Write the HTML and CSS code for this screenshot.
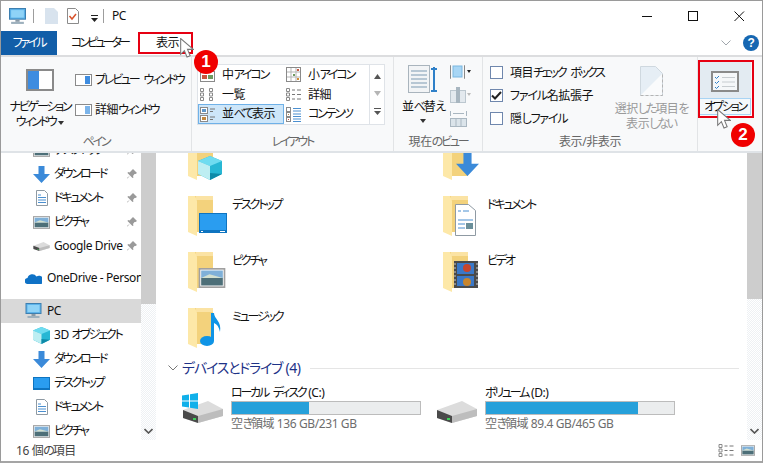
FILE: index.html
```html
<!DOCTYPE html>
<html lang="ja">
<head>
<meta charset="utf-8">
<title>PC</title>
<link rel="stylesheet" href="styles.css">
</head>
<body>
<svg class="defs" width="0" height="0">
  <defs>
    <symbol id="monitor" viewBox="0 0 16 16"><rect x="0.5" y="0.5" width="15" height="10" fill="#5cb3ea" stroke="#3d7fb0"/><rect x="2" y="2" width="12" height="7" fill="#8fd3f7"/><rect x="6" y="11" width="4" height="2" fill="#8a9aa6"/><rect x="2" y="13" width="12" height="2" fill="#9db0bd"/></symbol>
    <symbol id="arrow" viewBox="0 0 17 17"><path d="M5.5 0h6v8h5.5l-8.500 9L0 8h5.500z" fill="#3b8ad9"/></symbol>
    <symbol id="doc" viewBox="0 0 12 16"><path d="M.5.500h8l3 3v12H.500z" fill="#fff" stroke="#8f9aa3"/><path d="M2 5h3M2 7.500h8M2 10h8M2 12.500h8" stroke="#4a8fd0"/></symbol>
    <symbol id="pic" viewBox="0 0 16 12"><rect x=".5" y=".5" width="15" height="11" fill="#fff" stroke="#a0a0a0"/><rect x="1.500" y="1.500" width="13" height="4.500" fill="#7fb0d8"/><rect x="1.500" y="6" width="13" height="4.500" fill="#4d6f78"/><path d="M1.500 6l5-2.200 8 2.200z" fill="#d3e0cf"/></symbol>
    <symbol id="pin" viewBox="0 0 10 10"><path d="M6 0l4 4-1.500 1-1 0-1.500 2 .5 1.500-1 .5L3 6.500 0.500 9.500 0 9l3-2.500L.5 4l.5-1 1.500.5L5 1z" fill="#9a9a9a"/></symbol>
    <symbol id="cube" viewBox="0 0 24 24"><path d="M12 0l12 5v13l-12 6L0 18V5z" fill="#27b7d4"/><path d="M12 0l12 5-12 5L0 5z" fill="#6fdcf0"/><path d="M0 5l12 5v14L0 18z" fill="#bdeef2"/><path d="M12 17l12 1-12 6z" fill="#0e8aa8"/></symbol>
    <symbol id="drive" viewBox="0 0 42 22"><path d="M1 9L26 0l15 8v7L16 22 1 17z" fill="#dcdcdc"/><path d="M1 9l15 6v7L1 17z" fill="#4a4a4a"/><path d="M16 15L41 8v7l-25 7z" fill="#bdbdbd"/><rect x="11" y="17" width="3" height="2" fill="#3ecf5a"/></symbol>
    <symbol id="folder" viewBox="0 0 26 40"><path d="M1 0h25v36H9z" fill="#f3d27c"/><path d="M9 0h17v4H9z" fill="#fbe3a4"/><path d="M1 0h7l2 5v35l-9-4z" fill="#fde8a8"/></symbol>
    <symbol id="cursor" viewBox="0 0 13 19"><path d="M.5.500v15l3.500-3.500 2.500 6 3-1.200-2.500-6h5.500z" fill="#fff" stroke="#777"/></symbol>
    <symbol id="i-medium" viewBox="0 0 15 15"><rect x=".5" y="4.500" width="14" height="10" fill="#fff" stroke="#8a8a8a"/><rect x="2" y="8" width="5" height="4" fill="#c9553f"/><rect x="8" y="8" width="5" height="4" fill="#6d9a5f"/></symbol>
    <symbol id="i-small" viewBox="0 0 15 15"><rect x=".5" y=".5" width="14" height="14" fill="#fff" stroke="#8a8a8a"/><path d="M5 1v13M10 1v13M1 5h13M1 10h13" stroke="#b5b5b5"/><rect x="11" y="2" width="2" height="2" fill="#c9553f"/><rect x="11" y="11" width="2" height="2" fill="#d08a35"/><rect x="7" y="7" width="2" height="2" fill="#6d9a5f"/></symbol>
    <symbol id="i-list" viewBox="0 0 15 15"><path d="M.5 1.500h3v3h-3zM.5 6h3v3h-3zM.5 10.500h3v3h-3zM9.500 1.500h3v3h-3zM9.500 6h3v3h-3zM9.500 10.500h3v3h-3z" fill="#fff" stroke="#8a8a8a"/></symbol>
    <symbol id="i-details" viewBox="0 0 15 15"><path d="M.5 1.500h3v3h-3zM.5 6h3v3h-3zM.5 10.500h3v3h-3z" fill="#fff" stroke="#8a8a8a"/><path d="M6 3h3M11 3h4M6 7.500h3M11 7.500h4M6 12h3M11 12h4" stroke="#777"/></symbol>
    <symbol id="i-tiles" viewBox="0 0 15 15"><rect x=".5" y=".5" width="7" height="6" fill="#fff" stroke="#8a8a8a"/><rect x=".5" y="8.500" width="7" height="6" fill="#fff" stroke="#8a8a8a"/><rect x="2" y="2" width="4" height="3" fill="#5f97c9"/><rect x="2" y="10" width="4" height="3" fill="#c2883f"/><path d="M10 2h5M10 4.500h3M10 10h5M10 12.500h3" stroke="#777"/></symbol>
    <symbol id="i-content" viewBox="0 0 15 15"><rect x=".5" y=".5" width="4" height="4" fill="#fff" stroke="#8a8a8a"/><rect x=".5" y="5.500" width="4" height="4" fill="#fff" stroke="#8a8a8a"/><rect x=".5" y="10.500" width="4" height="4" fill="#fff" stroke="#8a8a8a"/><rect x="2" y="7" width="1" height="1" fill="#c2883f"/><rect x="2" y="12" width="1" height="1" fill="#c9553f"/><path d="M7 1.500h8M7 4h8M7 7h8M7 9.500h8M7 12h8M7 14.500h8" stroke="#4a8fd0"/></symbol>
  </defs>
</svg>

<div class="window">
  <header class="titlebar">
    <svg class="ti-pc" width="17" height="17"><use href="#monitor"/></svg>
    <span class="ti-sep"></span>
    <svg class="ti-new" width="13" height="16" viewBox="0 0 13 16"><path d="M0 0h9l4 4v12H0z" fill="#d8e3ee"/></svg>
    <svg class="ti-check" width="12" height="16" viewBox="0 0 12 16"><path d="M.5.500h8l3 3v12H.500z" fill="#fff" stroke="#8b8b8b"/><path d="M2.500 8l2.500 3 4-5" fill="none" stroke="#d9532c" stroke-width="1.500"/></svg>
    <svg class="ti-caret" width="7" height="7" viewBox="0 0 7 7"><path d="M0 0h7v1H0zM0 3h7L3.500 7z" fill="#222"/></svg>
    <span class="ti-sep ti-sep2"></span>
    <span class="ti-name">PC</span>
    <span class="winbtns">
      <svg width="11" height="11" viewBox="0 0 11 11"><path d="M0 5.500h10" stroke="#111"/></svg>
      <svg width="11" height="11" viewBox="0 0 11 11"><rect x=".5" y=".5" width="9" height="9" fill="none" stroke="#111"/></svg>
      <svg width="11" height="11" viewBox="0 0 11 11"><path d="M.5.500l9.500 9.500M10 .500L.5 10" stroke="#111"/></svg>
    </span>
  </header>

  <nav class="tabs">
    <span class="tab tab-file"><span class="k">ファイル</span></span>
    <span class="tab tab-pc"><span class="kx">コンピューター</span></span>
    <span class="tab tab-view">表示</span>
    <span class="tab-tools">
      <svg width="10" height="6" viewBox="0 0 10 6"><path d="M.5.500L5 5 9.500.500" fill="none" stroke="#a0a6ac"/></svg>
      <span class="help">?</span>
    </span>
  </nav>

  <section class="ribbon">
    <div class="group g-pane">
      <div class="g-body pane-body">
        <div class="big-btn nav-pane">
          <svg width="28" height="22" viewBox="0 0 28 22"><rect x="1" y="1" width="26" height="20" fill="#fff" stroke="#8a8a8a" stroke-width="2"/><rect x="2" y="2" width="11" height="18" fill="#3e8ce0"/></svg>
          <span class="big-label"><span class="k">ナビゲーション</span><br><span class="k">ウィンドウ</span> <span class="caret"></span></span>
        </div>
        <div class="pane-list">
          <div class="pane-row"><svg width="17" height="12" viewBox="0 0 17 12"><rect x=".5" y=".5" width="16" height="11" fill="#fff" stroke="#8a8a8a"/><rect x="10" y="2" width="5" height="8" fill="#3e8ce0"/></svg><span class="k">プレビュー ウィンドウ</span></div>
          <div class="pane-row"><svg width="17" height="12" viewBox="0 0 17 12"><rect x=".5" y=".5" width="16" height="11" fill="#fff" stroke="#8a8a8a"/><rect x="10" y="2" width="5" height="8" fill="#7bb4ea"/></svg><span>詳細<span class="k">ウィンドウ</span></span></div>
        </div>
      </div>
      <div class="g-label"><span class="k">ペイン</span></div>
    </div>

    <div class="group g-layout">
      <div class="g-body layout-body">
        <div class="gallery">
          <div class="gal-cols">
            <div class="gal-col c1">
              <div class="gal-row"><svg width="15" height="15"><use href="#i-medium"/></svg><span>中<span class="k">アイコン</span></span></div>
              <div class="gal-row"><svg width="15" height="15"><use href="#i-list"/></svg><span>一覧</span></div>
              <div class="gal-row sel"><svg width="15" height="15"><use href="#i-tiles"/></svg><span>並<span class="k">べて</span>表示</span></div>
            </div>
            <div class="gal-col c2">
              <div class="gal-row"><svg width="15" height="15"><use href="#i-small"/></svg><span>小<span class="k">アイコン</span></span></div>
              <div class="gal-row"><svg width="15" height="15"><use href="#i-details"/></svg><span>詳細</span></div>
              <div class="gal-row"><svg width="15" height="15"><use href="#i-content"/></svg><span class="k">コンテンツ</span></div>
            </div>
          </div>
          <div class="gal-scroll">
            <svg width="7" height="5" viewBox="0 0 7 5"><path d="M0 5L3.500 0 7 5z" fill="#555"/></svg>
            <svg width="7" height="5" viewBox="0 0 7 5"><path d="M0 0L3.500 5 7 0z" fill="#b5b5b5"/></svg>
            <svg width="7" height="7" viewBox="0 0 7 7"><path d="M0 0h7v1H0zM0 3h7L3.500 7z" fill="#555"/></svg>
          </div>
        </div>
      </div>
      <div class="g-label"><span class="k">レイアウト</span></div>
    </div>

    <div class="group g-view">
      <div class="g-body view-body">
        <div class="big-btn sort">
          <svg width="31" height="29" viewBox="0 0 31 29"><rect x=".5" y=".5" width="21" height="27" fill="#f2f4f6" stroke="#a9b4bd"/><path d="M3 6h16M3 10h16M3 14h16M3 18h16M3 22h16" stroke="#b7c7d4" stroke-width="2"/><path d="M26 2v24" stroke="#2f80c8" stroke-width="2"/><path d="M23 4h6M23 26h6" stroke="#2f80c8" stroke-width="2"/></svg>
          <span class="big-label">並<span class="k">べ</span>替<span class="k">え</span><br><span class="caret"></span></span>
        </div>
        <div class="view-tools">
          <svg width="21" height="14" viewBox="0 0 21 14"><path d="M1 .5H.5v13H1M14 .5h.5v13H14" fill="none" stroke="#888"/><rect x="3" y="1" width="9" height="11" fill="#a8d6f5" stroke="#7bb7e0"/><path d="M17 5h4l-2 3z" fill="#222"/></svg>
          <svg width="21" height="16" viewBox="0 0 21 16"><rect x=".5" y="3.500" width="15" height="12" fill="#e3e9ee" stroke="#bcc7cf"/><rect x="6" y="0" width="4" height="16" fill="#a8b6c0"/><path d="M17 6h4l-2 3z" fill="#bbb"/></svg>
          <svg width="17" height="16" viewBox="0 0 17 16"><path d="M.5 0v5M16.500 0v5M3 2.500h11" stroke="#a9b6c0"/><rect x=".5" y="7.500" width="16" height="8" fill="#dbe4ea" stroke="#aab7c1"/><path d="M6 8v7M11 8v7" stroke="#aab7c1"/></svg>
        </div>
      </div>
      <div class="g-label">現在<span class="k">のビュー</span></div>
    </div>

    <div class="group g-show">
      <div class="g-body show-body">
        <div class="checks">
          <label class="check"><span class="box"></span><span>項目<span class="k">チェック ボックス</span></span></label>
          <label class="check"><span class="box on"><svg width="11" height="9" viewBox="0 0 11 9"><path d="M1 4.500l3 3L10 1" fill="none" stroke="#222" stroke-width="2"/></svg></span><span><span class="k-lg">ファイル</span>名拡張子</span></label>
          <label class="check"><span class="box"></span><span>隠<span class="k-lg">しファイル</span></span></label>
        </div>
        <div class="big-btn hide-sel">
          <svg width="23" height="30" viewBox="0 0 23 30"><path d="M.5 29.500V.5h15l7 7v22" fill="#e6eef5"/><path d="M.5 29.500V.5h15l7 7v22z" fill="none" stroke="#cfd8df"/><path d="M.5 29.500L22 8v21.500z" fill="#fafbfc"/><path d="M.5 29.500h22V8" fill="none" stroke="#b4b4b4" stroke-dasharray="3 2"/></svg>
          <span class="big-label muted">選択<span class="k">した</span>項目<span class="k">を</span><br>表示<span class="k">しない</span></span>
        </div>
      </div>
      <div class="g-label">表示/非表示</div>
    </div>

    <div class="group g-opt">
      <div class="opt-btn">
        <div class="opt-top"><svg width="28" height="21" viewBox="0 0 28 21"><rect x="1" y="1" width="26" height="19" fill="#f5f7f9" stroke="#8a8a8a" stroke-width="2"/><path d="M4 6l1.500 1.500L8 5M4 11l1.500 1.500L8 10M4 16l1.500 1.500L8 15" fill="none" stroke="#2f80c8"/><path d="M11 6.500h13M11 11h13M11 15.500h13" stroke="#c7ccd0"/></svg></div>
        <div class="opt-label"><span class="k">オプション</span></div>
      </div>
    </div>
  </section>

  <div class="explorer">
    <aside class="nav">
      <div class="nav-list">
        <div class="nav-row sub"><svg width="17" height="13"><use href="#pic"/></svg><span class="k">デスクトップ</span><svg class="pin" width="10" height="10"><use href="#pin"/></svg></div>
        <div class="nav-row sub"><svg width="17" height="17"><use href="#arrow"/></svg><span class="k">ダウンロード</span><svg class="pin" width="10" height="10"><use href="#pin"/></svg></div>
        <div class="nav-row sub"><span class="ico-slot"><svg width="12" height="16"><use href="#doc"/></svg></span><span class="k">ドキュメント</span><svg class="pin" width="10" height="10"><use href="#pin"/></svg></div>
        <div class="nav-row sub"><svg width="17" height="13"><use href="#pic"/></svg><span class="k">ピクチャ</span><svg class="pin" width="10" height="10"><use href="#pin"/></svg></div>
        <div class="nav-row sub"><svg width="17" height="9"><use href="#drive"/></svg>Google Drive<svg class="pin" width="10" height="10"><use href="#pin"/></svg></div>
        <div class="nav-row top od"><svg width="17" height="11" viewBox="0 0 17 11"><path d="M3 11a3 3 0 0 1-.5-6 5 5 0 0 1 9-1.500 4 4 0 0 1 5 7.500z" fill="#0f72c6"/></svg>OneDrive - Personal</div>
        <div class="nav-row top pc"><svg width="17" height="16"><use href="#monitor"/></svg>PC</div>
        <div class="nav-row sub"><svg width="17" height="17"><use href="#cube"/></svg><span>3D <span class="k">オブジェクト</span></span></div>
        <div class="nav-row sub"><svg width="17" height="17"><use href="#arrow"/></svg><span class="k">ダウンロード</span></div>
        <div class="nav-row sub"><svg width="17" height="13" viewBox="0 0 17 13"><rect width="17" height="13" fill="#0e74c0"/><rect x="1" y="1" width="15" height="10" fill="#2a9df0"/></svg><span class="k">デスクトップ</span></div>
        <div class="nav-row sub"><span class="ico-slot"><svg width="12" height="16"><use href="#doc"/></svg></span><span class="k">ドキュメント</span></div>
        <div class="nav-row sub"><svg width="17" height="13"><use href="#pic"/></svg><span class="k">ピクチャ</span></div>
      </div>
      <div class="scrollbar">
        <div class="thumb nav-thumb"></div>
        <svg class="sb-down" width="9" height="6" viewBox="0 0 9 6"><path d="M.5 1l4 4 4-4" fill="none" stroke="#555" stroke-width="1.600"/></svg>
      </div>
    </aside>

    <main class="content">
      <div class="folders">
        <div class="folder"><svg class="fold-ico" width="45" height="40" viewBox="0 0 45 40"><use href="#folder" width="26" height="40"/><use href="#cube" x="11" y="16" width="24" height="24"/></svg><span class="fold-name"></span></div>
        <div class="folder"><svg class="fold-ico" width="45" height="40" viewBox="0 0 45 40"><use href="#folder" width="26" height="40"/><use href="#arrow" x="14" y="13" width="23" height="23"/></svg><span class="fold-name"></span></div>
        <div class="folder"><svg class="fold-ico" width="45" height="40" viewBox="0 0 45 40"><use href="#folder" width="26" height="40"/><rect x="12" y="17" width="28" height="20" fill="#0e74c0"/><rect x="13" y="18" width="26" height="16" fill="#2a9df0"/><path d="M14 35.500h2M33 35.500h5" stroke="#fff"/></svg><span class="fold-name"><span class="k">デスクトップ</span></span></div>
        <div class="folder"><svg class="fold-ico" width="45" height="40" viewBox="0 0 45 40"><use href="#folder" width="26" height="40"/><g transform="translate(13 4)"><path d="M.5 4.500h13l7 6v25H.5z" fill="#fff" stroke="#8f9aa3"/><path d="M3 11h3M8 11h6M3 20h15M3 24h7M3 28h7" stroke="#4a8fd0"/><rect x="11" y="23" width="7" height="6" fill="#6a8f9a"/></g></svg><span class="fold-name"><span class="k">ドキュメント</span></span></div>
        <div class="folder"><svg class="fold-ico" width="45" height="40" viewBox="0 0 45 40"><use href="#folder" width="26" height="40"/><use href="#pic" x="11" y="16" width="28" height="20"/></svg><span class="fold-name"><span class="k">ピクチャ</span></span></div>
        <div class="folder"><svg class="fold-ico" width="45" height="40" viewBox="0 0 45 40"><use href="#folder" width="26" height="40"/><rect x="12" y="9" width="24" height="27" fill="#4a4a4a"/><rect x="15" y="11" width="17" height="11" fill="#3a78c8"/><rect x="15" y="24" width="17" height="10" fill="#3a78c8"/><circle cx="25" cy="16" r="4" fill="#c8452c"/><circle cx="25" cy="30" r="4" fill="#c8852c"/><path d="M13 11v24M35 11v24" stroke="#c9c9c9" stroke-dasharray="2 2"/></svg><span class="fold-name"><span class="k">ビデオ</span></span></div>
        <div class="folder"><svg class="fold-ico" width="45" height="40" viewBox="0 0 45 40"><use href="#folder" width="26" height="40"/><ellipse cx="20" cy="33" rx="7" ry="5" fill="#0f94e6"/><path d="M24 5h3c0 6 8 8 6 19-1-5-3-8-6-9v18h-3z" fill="#0f94e6"/></svg><span class="fold-name"><span class="k">ミュージック</span></span></div>
      </div>
      <div class="section-head">
        <svg width="10" height="6" viewBox="0 0 10 6"><path d="M.5.500L5 5 9.500.500" fill="none" stroke="#777"/></svg>
        <span class="section-title"><span class="k-lg">デバイスとドライブ</span> (4)</span>
        <span class="section-line"></span>
      </div>
      <div class="drives">
        <div class="drive">
          <svg class="drive-ico" width="42" height="34" viewBox="0 0 42 34"><use href="#drive" y="11" width="42" height="22"/><g fill="#10b0ea"><path d="M0 5.500L7 4.500v6H0zM8 4.300L16 3v7.500H8zM0 11.500h7v6l-7-1zM8 11.500h8V19l-8-1.200z"/></g></svg>
          <div class="drive-info">
            <div class="drive-name"><span class="k">ローカル ディスク</span> (C:)</div>
            <div class="bar"><div class="bar-fill" style="width:41%"></div></div>
            <div class="drive-free">空<span class="k">き</span>領域 136 GB/231 GB</div>
          </div>
        </div>
        <div class="drive">
          <svg class="drive-ico" width="42" height="34" viewBox="0 0 42 34"><use href="#drive" y="11" width="42" height="22"/></svg>
          <div class="drive-info">
            <div class="drive-name"><span class="k">ボリューム</span> (D:)</div>
            <div class="bar"><div class="bar-fill" style="width:81%"></div></div>
            <div class="drive-free">空<span class="k">き</span>領域 89.4 GB/465 GB</div>
          </div>
        </div>
      </div>
    </main>

    <div class="scrollbar main-sb">
      <div class="thumb main-thumb"></div>
      <svg class="sb-down" width="9" height="6" viewBox="0 0 9 6"><path d="M.5 1l4 4 4-4" fill="none" stroke="#555" stroke-width="1.600"/></svg>
    </div>
  </div>

  <footer class="status">
    <span class="status-text">16 個<span class="k">の</span>項目</span>
    <span class="status-icons">
      <svg width="16" height="15"><use href="#i-details"/></svg>
      <svg width="14" height="11"><use href="#pic"/></svg>
    </span>
  </footer>

  <div class="mark mark-tab"></div>
  <div class="mark mark-opt"></div>
  <span class="badge badge-1">1</span>
  <span class="badge badge-2">2</span>
  <svg class="cursor cursor-1" width="14" height="20"><use href="#cursor"/></svg>
  <svg class="cursor cursor-2" width="14" height="20"><use href="#cursor"/></svg>
</div>
</body>
</html>
```

FILE: styles.css
```css
* { box-sizing: border-box; }
html, body { margin: 0; padding: 0; background: #fff; }
.defs { position: absolute; }
.window {
  position: relative;
  width: 763px;
  height: 463px;
  overflow: hidden;
  display: flex;
  flex-direction: column;
  background: #fff;
  border-top: 1px solid #9a9a9a;
  border-left: 1px solid #9a9a9a;
  border-right: 1px solid #9a9a9a;
  border-bottom: 2px solid #a5a5a5;
  font: 12px/16px "Noto Sans", "Noto Sans CJK JP", sans-serif;
  font-feature-settings: "palt";
  letter-spacing: -0.4px;
  color: #111;
}
svg { flex: none; display: block; }
.k { letter-spacing: -2.2px; word-spacing: 4px; }
.kx { letter-spacing: -2.9px; }
.k-lg { letter-spacing: -1.2px; }

.caret { display: inline-block; border: 3px solid transparent; border-top: 4px solid #333; border-bottom: 0; vertical-align: middle; }

/* title bar */
.titlebar { height: 30px; flex: none; display: flex; align-items: center; padding-left: 8px; }
.ti-sep { width: 1px; height: 14px; background: #9d9d9d; margin: 0 11px 0 7px; }
.ti-sep2 { margin: 0 8px 0 5px; }
.ti-check { margin-left: 9px; }
.ti-caret { margin-left: 12px; margin-top: 4px; }
.ti-name { font-size: 12px; }
.winbtns { margin-left: auto; display: flex; gap: 35px; padding-right: 17px; }

/* tabs */
.tabs { height: 24px; flex: none; display: flex; align-items: center; }
.tab { height: 24px; line-height: 23px; text-align: center; }
.tab-file { width: 56px; background: #125ea8; color: #fff; }
.tab-pc { width: 82px; padding-left: 3px; }
.tab-view { width: 54px; padding-left: 3px; }
.tab-tools { margin-left: auto; display: flex; align-items: center; gap: 12px; padding-right: 3px; }
.help { width: 16px; height: 16px; border-radius: 50%; background: #1667b2; color: #fff; font: bold 12px/16px "Liberation Sans", sans-serif; text-align: center; }

/* ribbon */
.ribbon {
  height: 98px;
  flex: none;
  display: flex;
  background: #f8f9fa;
  border-top: 2px solid #dcdddf;
  border-bottom: 2px solid #dfe3e7;
}
.group { display: flex; flex-direction: column; border-right: 1px solid #e2e4e6; }
.g-pane { width: 191px; }
.g-layout { width: 202px; }
.g-view { width: 89px; }
.g-show { width: 215px; }
.g-opt { flex: 1; border-right: 0; }
.g-body { flex: 1; display: flex; min-height: 0; }
.g-label { height: 23px; padding-top: 5px; line-height: 18px; text-align: center; color: #666; flex: none; white-space: nowrap; }
.big-btn { display: flex; flex-direction: column; align-items: center; flex: none; }
.big-label { text-align: center; line-height: 15px; margin-top: 8px; white-space: nowrap; }
.muted { color: #9a9a9a; }

.pane-body { padding: 12px 0 0 4px; }
.nav-pane { width: 70px; }
.pane-list { display: flex; flex-direction: column; gap: 14px; padding-top: 3px; }
.pane-row { height: 16px; display: flex; align-items: center; gap: 3px; white-space: nowrap; }

.layout-body { padding: 7px 0 0 5px; }
.gallery { width: 188px; height: 61px; background: #fff; border: 1px solid #dfe3e8; display: flex; }
.gal-cols { flex: 1; display: flex; }
.gal-col { display: flex; flex-direction: column; }
.c1 { width: 86px; }
.gal-row { height: 20px; display: flex; align-items: center; gap: 7px; padding-left: 2px; white-space: nowrap; }
.gal-row.sel { background: #cde6f9; outline: 1px solid #6fb1e8; outline-offset: -1px; }
.gal-scroll { width: 15px; border-left: 1px solid #dfe3e8; display: flex; flex-direction: column; align-items: center; justify-content: space-around; padding: 3px 0; }

.view-body { padding: 8px 0 0 13px; }
.sort { width: 32px; }
.sort .big-label { margin: 6px -12px 0; width: 56px; line-height: 13px; }
.view-tools { margin-left: 11px; display: flex; flex-direction: column; gap: 8px; }

.show-body { padding: 9px 0 0 7px; }
.checks { width: 131px; display: flex; flex-direction: column; gap: 10px; flex: none; }
.check { display: flex; align-items: center; gap: 7px; height: 13px; white-space: nowrap; }
.box { width: 13px; height: 13px; border: 1px solid #6f87ad; background: #fff; display: flex; align-items: center; justify-content: center; flex: none; }
.hide-sel { width: 60px; }
.hide-sel .big-label { margin: 5px -15px 0; width: 90px; color: #9a9a9a; }

.g-opt { padding: 5px 0 0 1px; }
.opt-btn { width: 52px; height: 54px; }
.opt-top { height: 36px; background: #e3ebf2; display: flex; align-items: center; justify-content: center; padding-top: 3px; }
.opt-label { height: 17px; line-height: 15px; border: 1px solid #a9d4f4; text-align: center; background: #f4f8fb; white-space: nowrap; }

/* explorer */
.explorer { flex: 1; min-height: 0; display: flex; }
.nav { width: 155px; display: flex; flex: none; }
.nav-list { width: 140px; overflow: hidden; flex: none; }
.nav-row { height: 24px; display: flex; align-items: center; white-space: nowrap; position: relative; }
.nav-row:first-child { margin-top: -15px; }
.nav-row.sub { padding-left: 32px; gap: 4px; }
.nav-row.top { padding-left: 24px; gap: 5px; }
.nav-row.od { margin-top: 8px; }
.nav-row.pc { margin-top: 9px; background: #d9d9d9; }
.ico-slot { width: 17px; display: flex; justify-content: center; flex: none; }
.pin { position: absolute; left: 126px; top: 7px; }
.scrollbar {
  width: 15px;
  flex: none;
  position: relative;
  display: flex;
  flex-direction: column;
  background: repeating-conic-gradient(#eef1f4 0 25%, #fff 0 50%) 0 0 / 2px 2px;
}
.thumb { background: #cdcdcd; flex: none; }
.nav-thumb { height: 151px; }
.main-thumb { height: 146px; }
.sb-down { margin: auto auto 6px; }

.content { flex: 1; min-width: 0; overflow: hidden; }
.folders { display: grid; grid-template-columns: 255px 255px; margin: -13px 0 0 31px; grid-auto-rows: 56px; }
.folder { display: flex; align-items: flex-start; }
.fold-name { margin-top: 1px; white-space: nowrap; }
.section-head { display: flex; align-items: center; gap: 4px; margin: -6px 8px 0 12px; height: 20px; }
.section-title { font-size: 14px; color: #1e3287; white-space: nowrap; }
.section-line { flex: 1; height: 1px; background: #e5e5e5; margin-left: 5px; }
.drives { display: grid; grid-template-columns: 254px 254px; margin: 7px 0 0 26px; }
.drive { display: flex; gap: 7px; }
.drive-ico { margin-top: 5px; }
.drive-info { width: 190px; }
.drive-name { height: 16px; line-height: 15px; white-space: nowrap; }
.bar { height: 14px; border: 1px solid #bcbcbc; background: #ebedee; }
.bar-fill { height: 100%; background: #26a0da; }
.drive-free { color: #6d6d6d; line-height: 17px; white-space: nowrap; }

/* status */
.status { height: 21px; flex: none; display: flex; align-items: center; padding: 0 7px 0 15px; color: #444; }
.status-icons { margin-left: auto; display: flex; gap: 7px; align-items: center; }

/* annotations */
.mark { position: absolute; border: 2px solid #e60012; }
.mark-tab { left: 137px; top: 31px; width: 55px; height: 22px; }
.mark-opt { left: 697px; top: 59px; width: 56px; height: 58px; }
.badge {
  position: absolute;
  width: 24px;
  height: 24px;
  border-radius: 50%;
  background: #f00000;
  color: #fff;
  font: bold 17px/24px "Liberation Sans", sans-serif;
  letter-spacing: 0;
  text-align: center;
}
.badge-1 { left: 193px; top: 49px; }
.badge-2 { left: 730px; top: 122px; }
.cursor { position: absolute; }
.cursor-1 { left: 179px; top: 37px; }
.cursor-2 { left: 716px; top: 108px; }
```
